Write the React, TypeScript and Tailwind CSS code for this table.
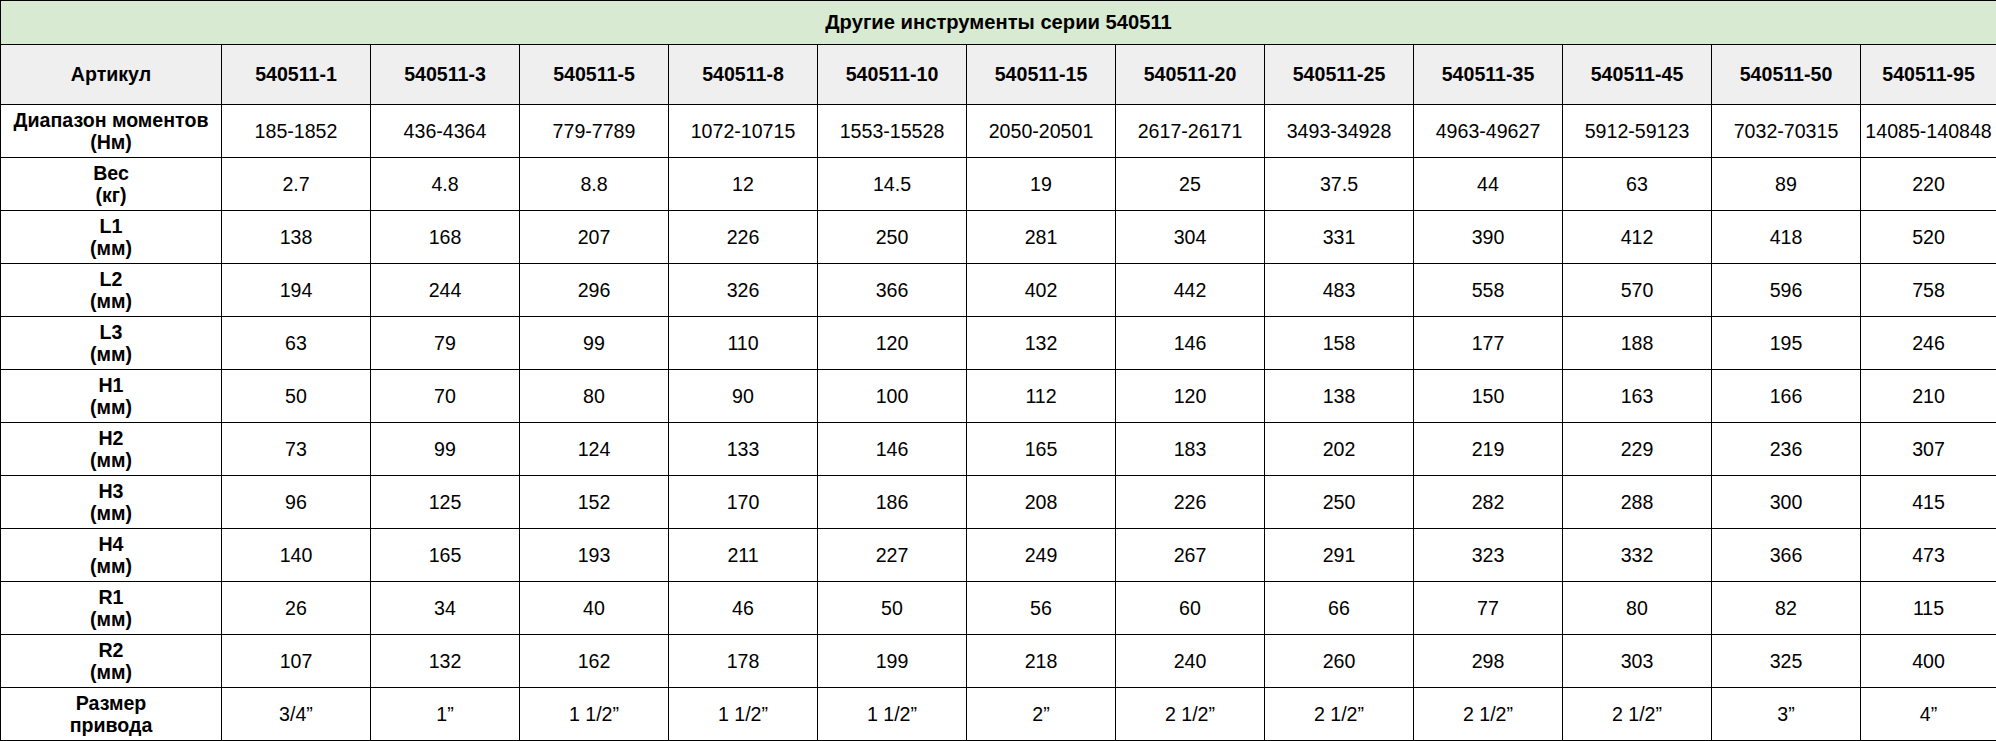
const products = [
  "540511-1",
  "540511-3",
  "540511-5",
  "540511-8",
  "540511-10",
  "540511-15",
  "540511-20",
  "540511-25",
  "540511-35",
  "540511-45",
  "540511-50",
  "540511-95",
];

const rows: { label: [string, string]; values: string[] }[] = [
  {
    label: ["Диапазон моментов", "(Нм)"],
    values: ["185-1852", "436-4364", "779-7789", "1072-10715", "1553-15528", "2050-20501", "2617-26171", "3493-34928", "4963-49627", "5912-59123", "7032-70315", "14085-140848"],
  },
  { label: ["Вес", "(кг)"], values: ["2.7", "4.8", "8.8", "12", "14.5", "19", "25", "37.5", "44", "63", "89", "220"] },
  { label: ["L1", "(мм)"], values: ["138", "168", "207", "226", "250", "281", "304", "331", "390", "412", "418", "520"] },
  { label: ["L2", "(мм)"], values: ["194", "244", "296", "326", "366", "402", "442", "483", "558", "570", "596", "758"] },
  { label: ["L3", "(мм)"], values: ["63", "79", "99", "110", "120", "132", "146", "158", "177", "188", "195", "246"] },
  { label: ["H1", "(мм)"], values: ["50", "70", "80", "90", "100", "112", "120", "138", "150", "163", "166", "210"] },
  { label: ["H2", "(мм)"], values: ["73", "99", "124", "133", "146", "165", "183", "202", "219", "229", "236", "307"] },
  { label: ["H3", "(мм)"], values: ["96", "125", "152", "170", "186", "208", "226", "250", "282", "288", "300", "415"] },
  { label: ["H4", "(мм)"], values: ["140", "165", "193", "211", "227", "249", "267", "291", "323", "332", "366", "473"] },
  { label: ["R1", "(мм)"], values: ["26", "34", "40", "46", "50", "56", "60", "66", "77", "80", "82", "115"] },
  { label: ["R2", "(мм)"], values: ["107", "132", "162", "178", "199", "218", "240", "260", "298", "303", "325", "400"] },
  {
    label: ["Размер", "привода"],
    values: ["3/4”", "1”", "1 1/2”", "1 1/2”", "1 1/2”", "2”", "2 1/2”", "2 1/2”", "2 1/2”", "2 1/2”", "3”", "4”"],
  },
];

export default function App() {
  return (
    <div className="w-[1996px] h-[741px] overflow-hidden bg-white">
      <table
        className="w-[1997px] table-fixed border-collapse text-[19.6px] leading-[22.4px] text-black"
        style={{ fontFamily: '"Liberation Sans", Arial, sans-serif' }}
      >
        <colgroup>
          <col className="w-[221px]" />
          {products.slice(0, 11).map((p) => (
            <col key={p} className="w-[149px]" />
          ))}
          <col className="w-[136px]" />
        </colgroup>
        <thead>
          <tr className="h-[44px]">
            <th colSpan={13} className="border border-black bg-[#d9ead3] text-[20.2px] font-bold text-center">
              Другие инструменты серии 540511
            </th>
          </tr>
          <tr className="h-[60px]">
            <th className="border border-black bg-[#efeff0] font-bold text-center">Артикул</th>
            {products.map((p) => (
              <th key={p} className="border border-black bg-[#efeff0] font-bold text-center whitespace-nowrap">
                {p}
              </th>
            ))}
          </tr>
        </thead>
        <tbody>
          {rows.map((row) => (
            <tr key={row.label[0]} className="h-[53px]">
              <th className="border border-black px-0 py-[3px] font-bold text-center whitespace-nowrap">
                {row.label[0]}
                <br />
                {row.label[1]}
              </th>
              {row.values.map((v, i) => (
                <td key={i} className="border border-black px-0 text-center font-normal whitespace-nowrap">
                  {v}
                </td>
              ))}
            </tr>
          ))}
        </tbody>
      </table>
    </div>
  );
}
